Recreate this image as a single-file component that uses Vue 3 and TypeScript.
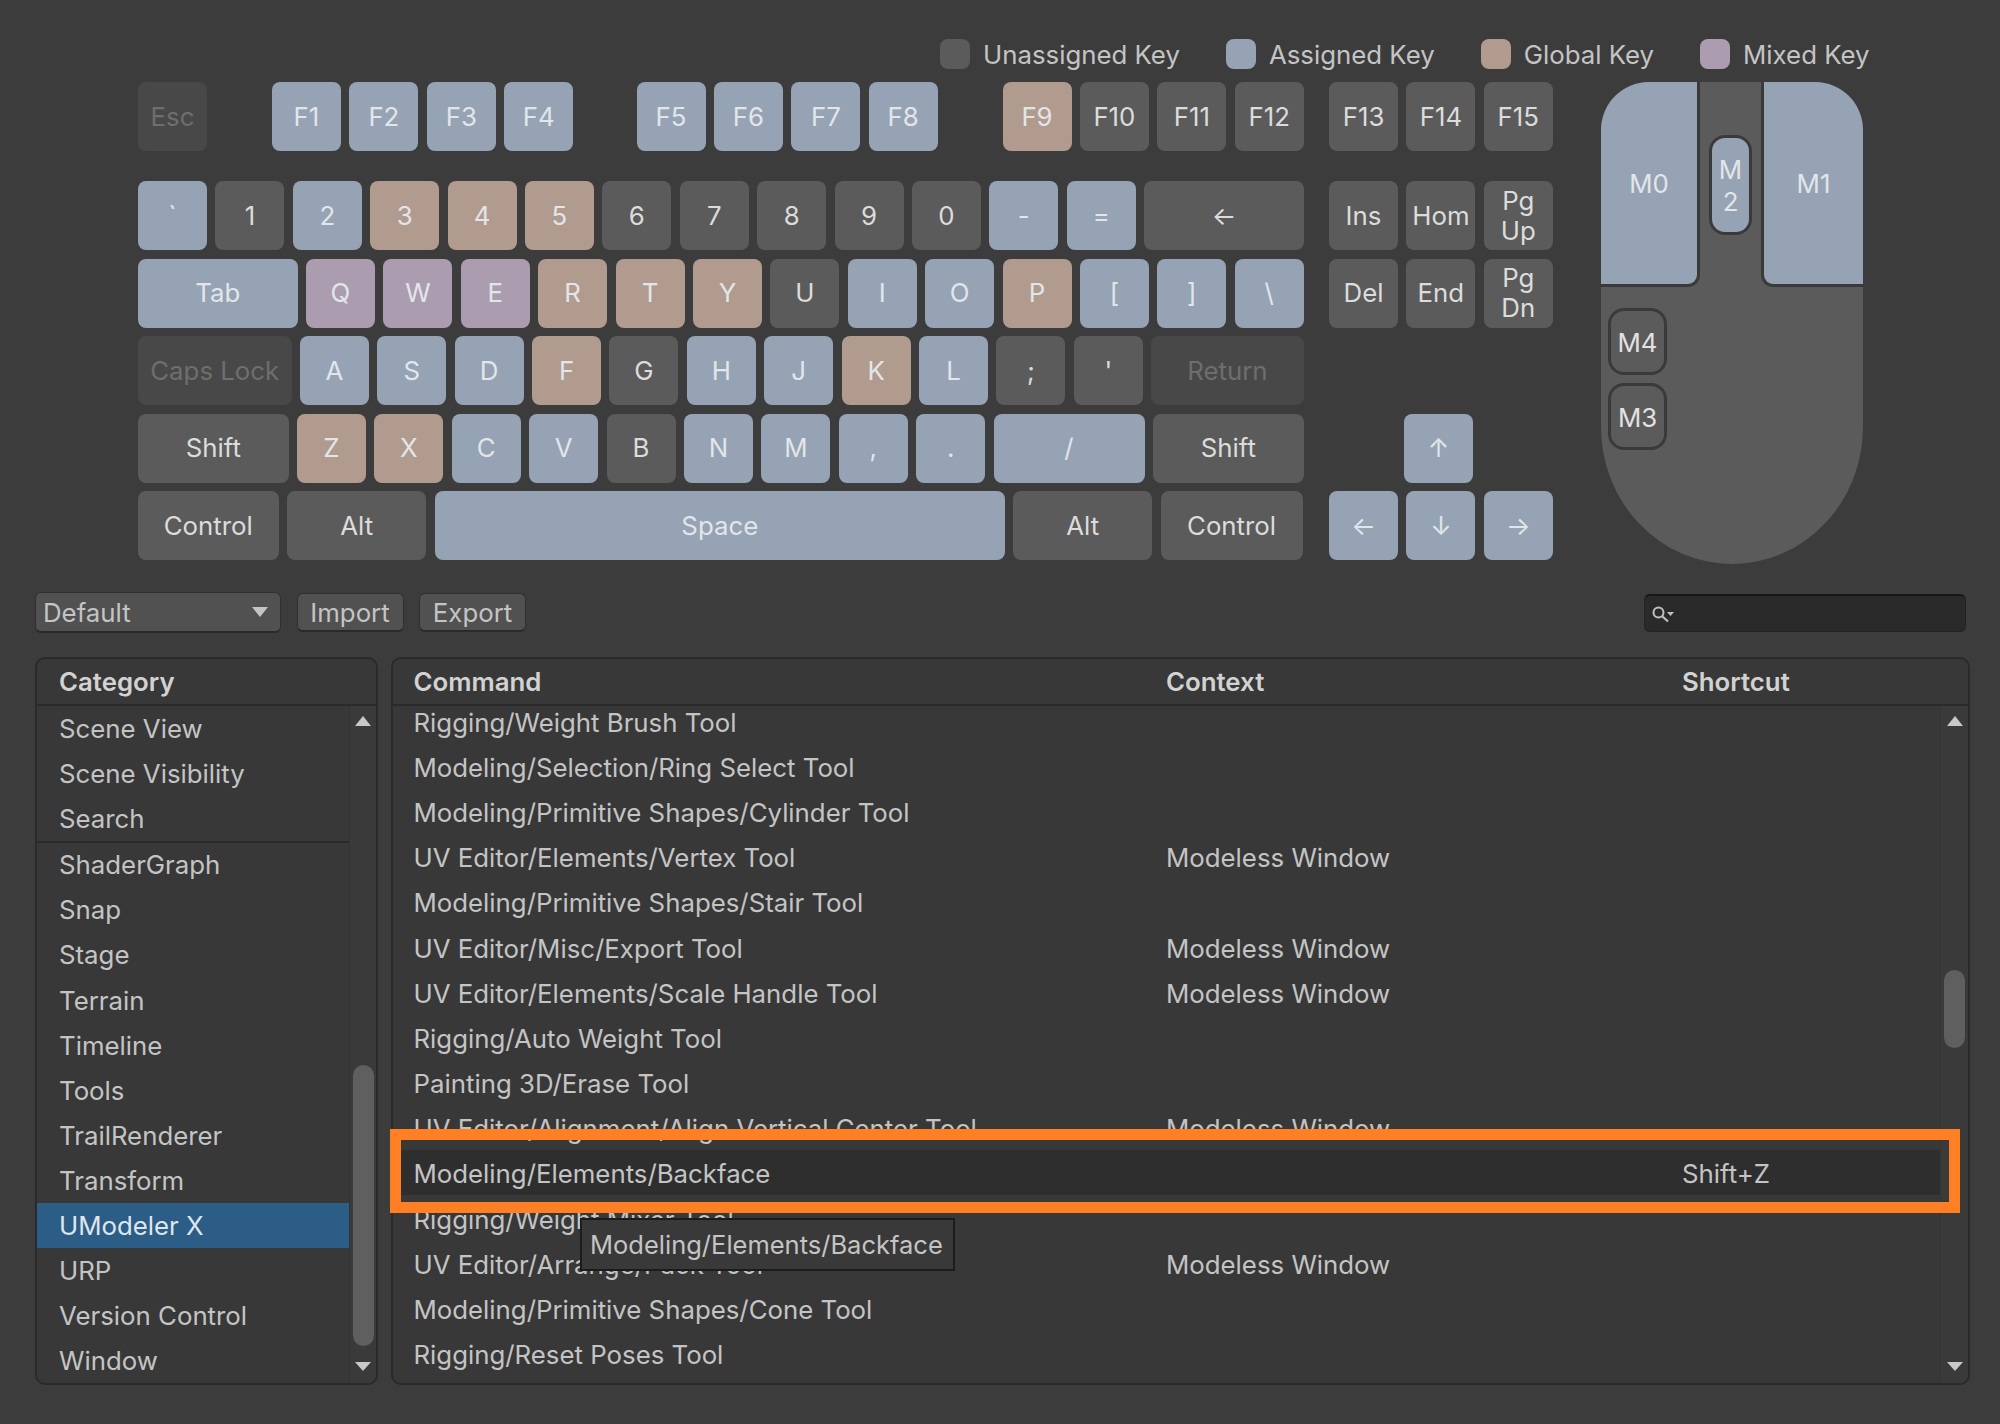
<script setup lang="ts">
type Kind = 'u' | 'a' | 'g' | 'm' | 'd'
interface Key { l: string; k: Kind; w?: number; ml?: number }
const K = (s: string): Key[] =>
  s.split(' ').map((p) => {
    const [k, l] = [p[0] as Kind, p.slice(1)]
    return { l, k }
  })

const row1: Key[] = [
  { l: 'Esc', k: 'd' },
  { l: 'F1', k: 'a', ml: 56.6 },
  { l: 'F2', k: 'a' },
  { l: 'F3', k: 'a' },
  { l: 'F4', k: 'a' },
  { l: 'F5', k: 'a', ml: 55 },
  { l: 'F6', k: 'a' },
  { l: 'F7', k: 'a' },
  { l: 'F8', k: 'a' },
  { l: 'F9', k: 'g', ml: 56.4 },
  { l: 'F10', k: 'u' },
  { l: 'F11', k: 'u' },
  { l: 'F12', k: 'u' },
]
const row2: Key[] = [
  ...K('a` u1 a2 g3 g4 g5 u6 u7 u8 u9 u0 a- a='),
  { l: '←', k: 'u', w: 160 },
]
const row3: Key[] = [
  { l: 'Tab', k: 'a', w: 159.6 },
  ...K('mQ mW mE gR gT gY uU aI aO gP a[ a] a\\'),
]
const row4: Key[] = [
  { l: 'Caps Lock', k: 'd', w: 153.5 },
  ...K('aA aS aD gF uG aH aJ gK aL u; u\''),
  { l: 'Return', k: 'd', w: 152.5 },
]
const row5: Key[] = [
  { l: 'Shift', k: 'u', w: 150.6 },
  ...K('gZ gX aC aV uB aN aM a, a.'),
  { l: '/', k: 'a', w: 151 },
  { l: 'Shift', k: 'u', w: 151 },
]
const row6: Key[] = [
  { l: 'Control', k: 'u', w: 140.5 },
  { l: 'Alt', k: 'u', w: 139.5 },
  { l: 'Space', k: 'a', w: 570 },
  { l: 'Alt', k: 'u', w: 139 },
  { l: 'Control', k: 'u', w: 142 },
]
const mainRows = [row2, row3, row4, row5, row6]

const navTop: Key[] = K('uF13 uF14 uF15')
const navArrows: Key[] = K('a← a↓ a→')

const legend = [
  { label: 'Unassigned Key', k: 'u' },
  { label: 'Assigned Key', k: 'a' },
  { label: 'Global Key', k: 'g' },
  { label: 'Mixed Key', k: 'm' },
]

const catsTop = ['Scene View', 'Scene Visibility', 'Search']
const cats = ['ShaderGraph', 'Snap', 'Stage', 'Terrain', 'Timeline', 'Tools', 'TrailRenderer', 'Transform', 'UModeler X', 'URP', 'Version Control', 'Window']

const M = 'Modeless Window'
const commands = [
  ['Rigging/Weight Brush Tool', '', ''],
  ['Modeling/Selection/Ring Select Tool', '', ''],
  ['Modeling/Primitive Shapes/Cylinder Tool', '', ''],
  ['UV Editor/Elements/Vertex Tool', M, ''],
  ['Modeling/Primitive Shapes/Stair Tool', '', ''],
  ['UV Editor/Misc/Export Tool', M, ''],
  ['UV Editor/Elements/Scale Handle Tool', M, ''],
  ['Rigging/Auto Weight Tool', '', ''],
  ['Painting 3D/Erase Tool', '', ''],
  ['UV Editor/Alignment/Align Vertical Center Tool', M, ''],
  ['Modeling/Elements/Backface', '', 'Shift+Z'],
  ['Rigging/Weight Mixer Tool', '', ''],
  ['UV Editor/Arrange/Pack Tool', M, ''],
  ['Modeling/Primitive Shapes/Cone Tool', '', ''],
  ['Rigging/Reset Poses Tool', '', ''],
]
const selected = 'Modeling/Elements/Backface'

function keyStyle(k: Key) {
  return { width: `${k.w ?? 69}px`, marginLeft: k.ml ? `${k.ml}px` : undefined }
}
</script>

<template>
  <div class="page">
    <div class="legend">
      <div v-for="item in legend" :key="item.label" class="legend-item">
        <span class="swatch" :class="item.k"></span>
        <span>{{ item.label }}</span>
      </div>
    </div>

    <div class="board">
      <div class="keys">
        <div class="row first">
          <div v-for="k in row1" :key="k.l" class="key" :class="k.k" :style="keyStyle(k)">{{ k.l }}</div>
        </div>
        <div v-for="(r, i) in mainRows" :key="i" class="row">
          <div v-for="(k, j) in r" :key="j" class="key" :class="k.k" :style="keyStyle(k)">{{ k.l }}</div>
        </div>
      </div>

      <div class="nav">
        <div class="row first">
          <div v-for="k in navTop" :key="k.l" class="key u">{{ k.l }}</div>
        </div>
        <div class="row">
          <div class="key u">Ins</div>
          <div class="key u">Hom</div>
          <div class="key u two">Pg<br />Up</div>
        </div>
        <div class="row">
          <div class="key u">Del</div>
          <div class="key u">End</div>
          <div class="key u two">Pg<br />Dn</div>
        </div>
        <div class="row empty"></div>
        <div class="row">
          <div class="key a up">↑</div>
        </div>
        <div class="row">
          <div v-for="k in navArrows" :key="k.l" class="key a">{{ k.l }}</div>
        </div>
      </div>

      <div class="mouse">
        <div class="mouse-top">
          <div class="btn-m0 a">M0</div>
          <div class="mid"><div class="btn-m2 a">M<br />2</div></div>
          <div class="btn-m1 a">M1</div>
        </div>
        <div class="side">
          <div class="btn-side">M4</div>
          <div class="btn-side">M3</div>
        </div>
      </div>
    </div>

    <div class="toolbar">
      <div class="dropdown"><span>Default</span><i class="tri-down"></i></div>
      <div class="button">Import</div>
      <div class="button">Export</div>
      <div class="search">
        <svg width="24" height="18" viewBox="0 0 24 18">
          <circle cx="6.5" cy="6.5" r="5" fill="none" stroke="#c0c0c0" stroke-width="2" />
          <path d="M10.5 10.5l5.5 5" stroke="#c0c0c0" stroke-width="2.2" />
          <path d="M15 6h7l-3.5 4z" fill="#c0c0c0" />
        </svg>
      </div>
    </div>

    <div class="panels">
      <section class="panel cat">
        <header class="head"><span>Category</span></header>
        <div class="body">
          <div class="list">
            <div v-for="c in catsTop" :key="c" class="cat-row">{{ c }}</div>
            <div class="sep"></div>
            <div v-for="c in cats" :key="c" class="cat-row" :class="{ sel: c === 'UModeler X' }">{{ c }}</div>
          </div>
          <div class="scroll">
            <i class="tri-up"></i>
            <div class="thumb thumb-cat"></div>
            <i class="tri-dn"></i>
          </div>
        </div>
      </section>

      <section class="panel cmd">
        <header class="head cols">
          <span class="c1">Command</span><span class="c2">Context</span><span>Shortcut</span>
        </header>
        <div class="body">
          <div class="list clip">
            <div class="cmd-list">
              <div v-for="r in commands" :key="r[0]" class="cmd-row cols" :class="{ sel2: r[0] === selected }">
                <span class="c1">{{ r[0] }}</span><span class="c2">{{ r[1] }}</span><span>{{ r[2] }}</span>
              </div>
            </div>
          </div>
          <div class="scroll">
            <i class="tri-up"></i>
            <div class="thumb thumb-cmd"></div>
            <i class="tri-dn"></i>
          </div>
        </div>
      </section>
    </div>

    <div class="highlight"></div>
    <div class="tooltip">Modeling/Elements/Backface</div>
  </div>
</template>

<style>
html,
body {
  margin: 0;
  background: #3c3c3c;
}
</style>

<style scoped>
.page {
  position: relative;
  width: 2000px;
  height: 1424px;
  overflow: hidden;
  box-sizing: border-box;
  padding-top: 38px;
  background: #3c3c3c;
  color: #c4c4c4;
  font-family: Inter, 'Liberation Sans', sans-serif;
  font-size: 25.8px;
}
.legend {
  display: flex;
  height: 31px;
  padding-left: 940px;
  gap: 46px;
  margin-bottom: 13px;
}
.legend-item {
  display: flex;
  align-items: center;
  gap: 13px;
  line-height: 33px;
}
.legend-item span + span { padding-top: 2px; }
.swatch {
  width: 30px;
  height: 30px;
  border-radius: 8px;
}
.u { background: #5b5b5b; }
.a { background: #95a3b4; }
.g { background: #b19b8f; }
.m { background: #ab9daf; }
.d { background: #484848; color: #6e6e6e; }

.board {
  display: flex;
  padding-left: 138px;
}
.keys { width: 1167px; }
.nav { width: 224px; margin-left: 24px; }
.row {
  display: flex;
  gap: 8.4px;
  height: 69px;
  margin-bottom: 8.5px;
}
.row.first { margin-bottom: 30px; }
.key {
  width: 69px;
  height: 69px;
  flex: none;
  display: flex;
  align-items: center;
  justify-content: center;
  text-align: center;
  border-radius: 8px;
  color: #dcdcdc;
  line-height: 30px;
  white-space: nowrap;
}
.key.a, .key.g, .key.m { color: #e2e6ea; }
.key.d { color: #6e6e6e; }
.key.up { margin-left: 75px; }

.mouse {
  width: 262px;
  height: 482px;
  margin-left: 48px;
  overflow: hidden;
  background: #5b5b5b;
  border-radius: 48px 48px 131px 131px / 48px 48px 137px 137px;
  color: #e2e2e2;
}
.mouse-top { display: flex; height: 205px; }
.btn-m0, .btn-m1 {
  box-sizing: border-box;
  display: flex;
  align-items: center;
  justify-content: center;
  color: #e2e6ea;
  border-bottom: 3px solid #3a3a3a;
}
.btn-m0 {
  width: 99px;
  border-right: 3px solid #3a3a3a;
  border-radius: 0 0 12px 0;
}
.btn-m1 {
  width: 102px;
  border-left: 3px solid #3a3a3a;
  border-radius: 0 0 0 12px;
}
.mid {
  flex: 1;
  display: flex;
  justify-content: center;
  padding-top: 53px;
}
.btn-m2 {
  width: 43px;
  height: 100px;
  box-sizing: border-box;
  border: 3px solid #3a3a3a;
  border-radius: 16px;
  display: flex;
  align-items: center;
  justify-content: center;
  text-align: center;
  line-height: 32px;
  padding-top: 1px;
  color: #e2e6ea;
}
.side {
  display: flex;
  flex-direction: column;
  gap: 8px;
  padding: 21px 0 0 7px;
}
.btn-side {
  width: 59px;
  height: 67px;
  box-sizing: border-box;
  border: 3px solid #3a3a3a;
  border-radius: 16px;
  display: flex;
  align-items: center;
  justify-content: center;
  padding-top: 1px;
}

.toolbar {
  display: flex;
  align-items: center;
  height: 41px;
  margin-top: 23.5px;
  padding: 0 34px 0 35px;
  gap: 15.5px;
}
.dropdown {
  width: 246px;
  height: 41px;
  box-sizing: border-box;
  display: flex;
  align-items: center;
  justify-content: space-between;
  padding: 0 12px 0 7px;
  background: #515151;
  border: 1px solid #303030;
  border-bottom: 2px solid #2a2a2a;
  border-radius: 6px;
}
.tri-down {
  border-left: 8px solid transparent;
  border-right: 8px solid transparent;
  border-top: 10px solid #c4c4c4;
}
.button {
  height: 39px;
  box-sizing: border-box;
  display: flex;
  align-items: center;
  justify-content: center;
  width: 107px;
  background: #515151;
  border: 1px solid #303030;
  border-bottom: 2px solid #2a2a2a;
  border-radius: 6px;
}
.search {
  width: 322px;
  height: 38px;
  box-sizing: border-box;
  margin-left: auto;
  display: flex;
  align-items: center;
  padding: 3px 0 0 7px;
  background: #2a2a2a;
  border: 1px solid #232323;
  border-top: 2px solid #171717;
  border-radius: 6px;
}

.panels {
  display: flex;
  gap: 13px;
  height: 728px;
  margin-top: 24px;
  padding-left: 35px;
}
.panel {
  box-sizing: border-box;
  display: flex;
  flex-direction: column;
  background: #383838;
  border: 2px solid #2a2a2a;
  border-radius: 10px;
  overflow: hidden;
}
.cat { width: 343px; }
.cmd { width: 1579px; }
.head {
  flex: none;
  height: 47px;
  box-sizing: border-box;
  display: flex;
  align-items: center;
  border-bottom: 2px solid #2a2a2a;
  padding-left: 21px;
  font-weight: 600;
  color: #d2d2d2;
}
.cat .head { padding-left: 22px; }
.body {
  flex: 1;
  display: flex;
  min-height: 0;
}
.list {
  flex: 1;
  min-width: 0;
  overflow: hidden;
}
.cat-row {
  height: 45.1px;
  box-sizing: border-box;
  line-height: 42.1px;
  padding: 2px 0 0 22px;
}
.cat-row.sel {
  background: #2c5d87;
  color: #dfe6ec;
}
.sep {
  height: 2px;
  margin-bottom: -1px;
  background: #2a2a2a;
}
.scroll {
  flex: none;
  width: 27px;
  box-sizing: border-box;
  display: flex;
  flex-direction: column;
  align-items: center;
  padding: 10px 0 12px;
  border-left: 1px solid #343434;
  background: #3a3a3a;
}
.tri-up {
  border-left: 8px solid transparent;
  border-right: 8px solid transparent;
  border-bottom: 10px solid #c8c8c8;
}
.tri-dn {
  margin-top: auto;
  border-left: 8px solid transparent;
  border-right: 8px solid transparent;
  border-top: 9px solid #c8c8c8;
}
.thumb {
  width: 21px;
  background: #5f5f5f;
  border-radius: 11px;
}
.thumb-cat { height: 281px; margin-top: 339px; }
.thumb-cmd { height: 78px; margin-top: 244px; }

.cmd .scroll { width: 28px; }
.cols { display: flex; align-items: center; }
.c1 { width: 752.5px; flex: none; }
.c2 { width: 516px; flex: none; }
.cmd .head, .cmd-row { padding-left: 20.5px; }
.cmd-list { margin-top: -8px; }
.cmd-row {
  height: 45.2px;
  box-sizing: border-box;
  padding-top: 3px;
  white-space: nowrap;
}
.cmd-row.sel2 { background: #2e2e2e; }

.highlight {
  position: absolute;
  left: 390px;
  top: 1129px;
  width: 1570px;
  height: 84px;
  box-sizing: border-box;
  border: 11px solid #ff7f24;
}
.tooltip {
  position: absolute;
  left: 580px;
  top: 1218px;
  width: 375px;
  height: 53px;
  box-sizing: border-box;
  display: flex;
  align-items: center;
  padding-left: 8px;
  font-size: 25.5px;
  background: #393939;
  border: 2px solid #1c1c1c;
  white-space: nowrap;
}
</style>
